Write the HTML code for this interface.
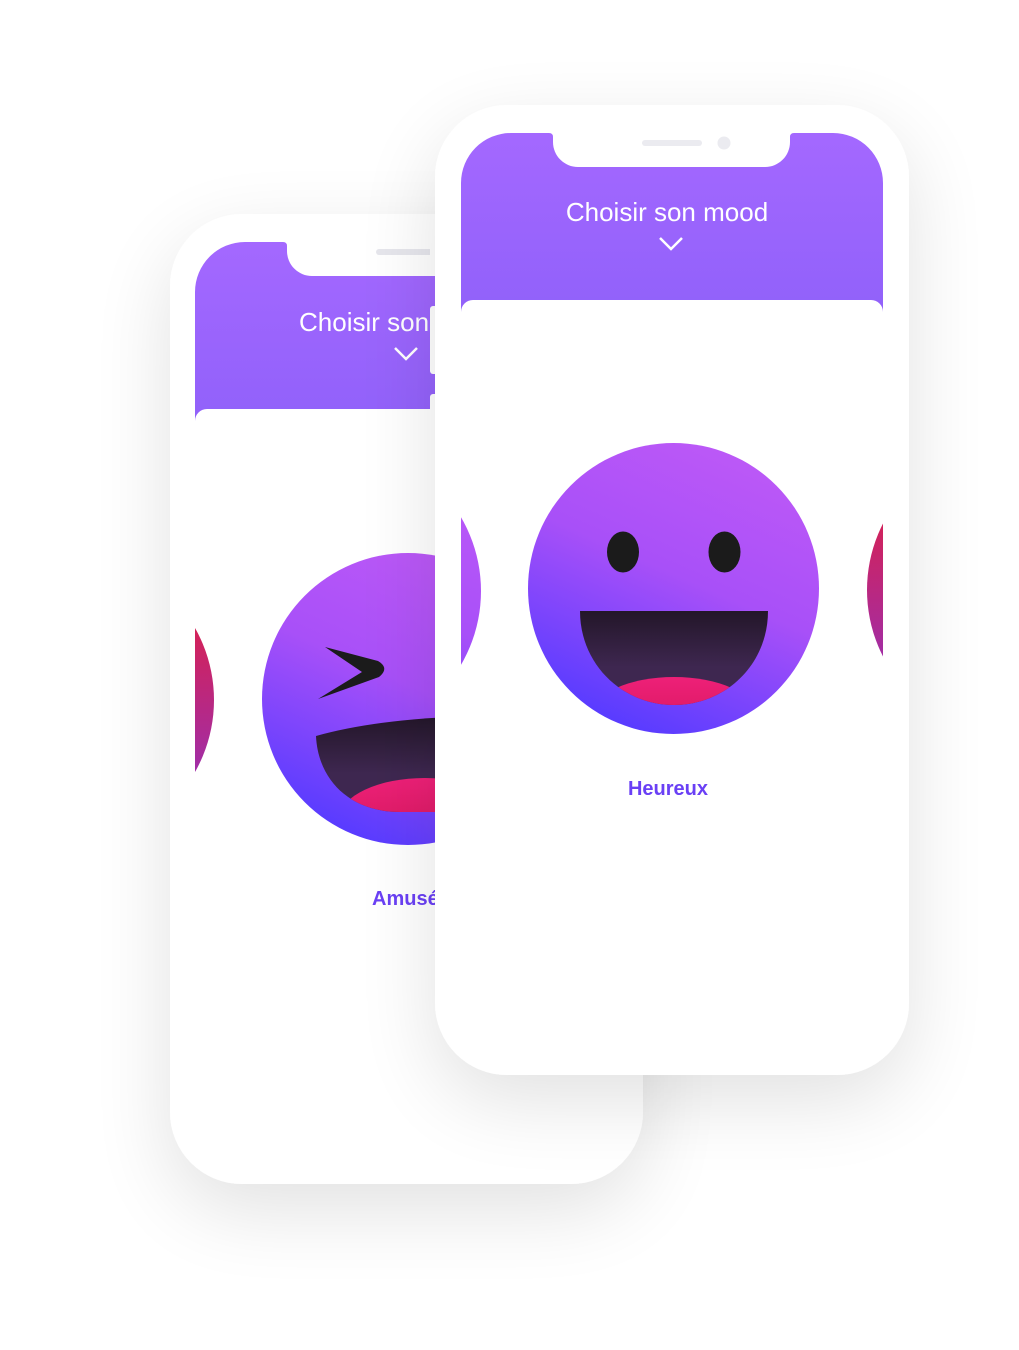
<!DOCTYPE html>
<html><head><meta charset="utf-8"><style>
html,body{margin:0;padding:0;background:#fff;}
svg{display:block;}
text{font-family:"Liberation Sans",sans-serif;}
</style></head><body>
<svg width="1019" height="1350" viewBox="0 0 1019 1350" xmlns="http://www.w3.org/2000/svg">
<defs>
  <filter id="sh" x="-40%" y="-30%" width="180%" height="170%">
    <feGaussianBlur in="SourceAlpha" stdDeviation="40"/>
    <feOffset dx="0" dy="26"/>
    <feComponentTransfer><feFuncA type="linear" slope="0.12"/></feComponentTransfer>
    <feMerge><feMergeNode/><feMergeNode in="SourceGraphic"/></feMerge>
  </filter>
  <linearGradient id="hdr" x1="0" y1="0" x2="0" y2="1">
    <stop offset="0" stop-color="#a468ff"/><stop offset="1" stop-color="#9161fa"/>
  </linearGradient>
  <linearGradient id="face" x1="0.7" y1="0.05" x2="0.3" y2="0.95">
    <stop offset="0" stop-color="#bb58f7"/><stop offset="0.45" stop-color="#a850f8"/><stop offset="1" stop-color="#5a3cff"/>
  </linearGradient>
  <linearGradient id="mouth" x1="0" y1="0" x2="0" y2="1">
    <stop offset="0" stop-color="#231629"/><stop offset="0.6" stop-color="#3e2750"/>
  </linearGradient>
  <linearGradient id="tongue" x1="0" y1="0" x2="0" y2="1">
    <stop offset="0" stop-color="#ee2078"/><stop offset="1" stop-color="#cf1555"/>
  </linearGradient>
  <linearGradient id="red" x1="0" y1="0" x2="0" y2="1">
    <stop offset="0.2" stop-color="#d9204f"/><stop offset="0.8" stop-color="#9b2fb0"/>
  </linearGradient>
  <clipPath id="scrF"><rect x="461" y="133" width="422" height="920" rx="50"/></clipPath>
  <clipPath id="scrB"><rect x="195" y="242" width="422" height="920" rx="50"/></clipPath>
  <clipPath id="mF"><path d="M580,611 H768 C768,665 725,705 674,705 C623,705 580,665 580,611 Z"/></clipPath>
  <clipPath id="mB"><path d="M316,736 Q380,718 480,716 L480,812 L400,812 C350,812 318,780 316,736Z"/></clipPath>
</defs>

<!-- BACK PHONE -->
<g>
  <rect x="165" y="345" width="10" height="36" rx="3" fill="#fff"/>
  <rect x="165" y="415" width="10" height="70" rx="3" fill="#fff"/>
  <rect x="165" y="505" width="10" height="68" rx="3" fill="#fff"/>
  <rect x="170" y="214" width="473" height="970" rx="72" fill="#fff" filter="url(#sh)"/>
  <g transform="translate(-266,109)">
    <path d="M461,312 V183 A50,50 0 0 1 511,133 H549 Q553,133 553,137 V142 A25,25 0 0 0 578,167 H765 A25,25 0 0 0 790,142 V137 Q790,133 794,133 H833 A50,50 0 0 1 883,183 V312 Z" fill="url(#hdr)"/>
    <rect x="461" y="300" width="422" height="40" rx="12" fill="#fff"/>
    <rect x="642" y="140" width="60" height="6" rx="3" fill="#e6e6ec"/>
  </g>
  <rect x="195" y="430" width="422" height="690" fill="#fff"/>
  <g clip-path="url(#scrB)">
    <circle cx="68" cy="700" r="146" fill="url(#red)"/>
    <circle cx="408" cy="699" r="146" fill="url(#face)"/>
    <path d="M325,647 L378,661 Q390,668 379,677 L318,699 L362,672 Z" fill="#1b1b1b"/>
    <path d="M316,736 Q380,718 480,716 C480,780 440,812 400,812 C350,812 318,780 316,736Z" fill="url(#mouth)"/>
    <ellipse cx="425" cy="818" rx="85" ry="40" fill="url(#tongue)" clip-path="url(#mB)"/>
  </g>
  <text x="299" y="331" font-size="26" fill="#fff">Choisir son mood</text>
  <polyline points="395,348 406,359 417,348" fill="none" stroke="#fff" stroke-width="2.5"/>
  <text x="372" y="905" font-size="20" font-weight="bold" fill="#6a40f5">Amusé</text>
</g>

<!-- FRONT PHONE -->
<g>
  <rect x="430" y="236" width="10" height="36" rx="3" fill="#fff"/>
  <rect x="430" y="306" width="10" height="68" rx="3" fill="#fff"/>
  <rect x="430" y="394" width="10" height="68" rx="3" fill="#fff"/>
  <rect x="904" y="330" width="9" height="110" rx="3" fill="#fff"/>
  <rect x="435" y="105" width="474" height="970" rx="72" fill="#fff" filter="url(#sh)"/>
  <path d="M461,312 V183 A50,50 0 0 1 511,133 H549 Q553,133 553,137 V142 A25,25 0 0 0 578,167 H765 A25,25 0 0 0 790,142 V137 Q790,133 794,133 H833 A50,50 0 0 1 883,183 V312 Z" fill="url(#hdr)"/>
  <rect x="461" y="300" width="422" height="40" rx="12" fill="#fff"/>
  <rect x="642" y="140" width="60" height="6" rx="3" fill="#ebebf0"/>
  <circle cx="724" cy="143" r="6.5" fill="#ebebf0"/>
  <text x="667" y="221" font-size="26" fill="#fff" text-anchor="middle">Choisir son mood</text>
  <polyline points="660,238 671,249 682,238" fill="none" stroke="#fff" stroke-width="2.5"/>
  <g clip-path="url(#scrF)">
    <circle cx="335" cy="591" r="146" fill="url(#face)"/>
    <circle cx="1013" cy="590" r="146" fill="url(#red)"/>
    <circle cx="673.5" cy="588.5" r="145.5" fill="url(#face)"/>
    <ellipse cx="623" cy="552" rx="16" ry="20.5" fill="#1b1b1b"/>
    <ellipse cx="724.5" cy="552" rx="16" ry="20.5" fill="#1b1b1b"/>
    <path d="M580,611 H768 C768,665 725,705 674,705 C623,705 580,665 580,611 Z" fill="url(#mouth)"/>
    <ellipse cx="674" cy="715" rx="82" ry="38" fill="url(#tongue)" clip-path="url(#mF)"/>
  </g>
  <text x="668" y="795" font-size="20" font-weight="bold" fill="#6a40f5" text-anchor="middle">Heureux</text>
</g>
</svg>
</body></html>
